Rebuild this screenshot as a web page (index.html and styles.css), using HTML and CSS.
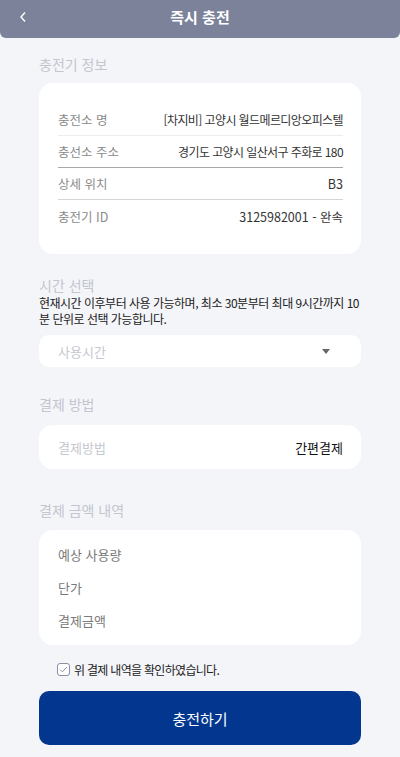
FILE: index.html
```html
<!DOCTYPE html>
<html lang="ko">
<head>
<meta charset="utf-8">
<link rel="stylesheet" href="styles.css">
</head>
<body>
<header class="topbar">
  <span class="back">
    <svg width="8" height="12" viewBox="0 0 8 12"><path d="M6 1.5 L2 6 L6 10.5" fill="none" stroke="#fff" stroke-width="1.4"/></svg>
  </span>
  <h1 class="title">즉시 충전</h1>
</header>
<main class="content">
  <h2 class="sec-title first">충전기 정보</h2>
  <section class="card info">
    <div class="row line-light"><span class="lbl">충전소 명</span><span class="val ko">[차지비] 고양시 월드메르디앙오피스텔</span></div>
    <div class="row line-dark"><span class="lbl">충선소 주소</span><span class="val ko">경기도 고양시 일산서구 주화로 180</span></div>
    <div class="row line-mid"><span class="lbl">상세 위치</span><span class="val">B3</span></div>
    <div class="row"><span class="lbl">충전기 ID</span><span class="val">3125982001 - 완속</span></div>
  </section>

  <h2 class="sec-title">시간 선택</h2>
  <p class="desc">현재시간 이후부터 사용 가능하며, 최소 30분부터 최대 9시간까지 10<br>분 단위로 선택 가능합니다.</p>
  <div class="select">
    <span class="placeholder">사용시간</span>
    <svg class="caret" width="8" height="5" viewBox="0 0 8 5"><path d="M0 0 H8 L4 5 Z" fill="#666"/></svg>
  </div>

  <h2 class="sec-title gap-lg">결제 방법</h2>
  <section class="card pay">
    <span class="placeholder">결제방법</span>
    <span class="pay-val">간편결제</span>
  </section>

  <h2 class="sec-title gap-xl">결제 금액 내역</h2>
  <section class="card amount">
    <div class="arow">예상 사용량</div>
    <div class="arow">단가</div>
    <div class="arow">결제금액</div>
  </section>

  <label class="agree">
    <span class="check">
      <svg width="13" height="13" viewBox="0 0 13 13"><rect x="0.5" y="0.5" width="12" height="12" rx="2.5" fill="#fff" stroke="#8a8fa6"/><path d="M3.2 6.6 L5.4 8.8 L9.8 4.2" fill="none" stroke="#8a8fa6" stroke-width="1"/></svg>
    </span>
    <span class="agree-text">위 결제 내역을 확인하였습니다.</span>
  </label>

  <button class="submit">충전하기</button>
</main>
</body>
</html>
```
FILE: styles.css
```css
* { box-sizing: border-box; }
html, body { margin: 0; padding: 0; }
body {
  background: #f4f5f9;
  font-family: "Noto Sans CJK KR", "Noto Sans", sans-serif;
  width: 400px;
  height: 757px;
  overflow: hidden;
}
.topbar {
  height: 38px;
  background: #7b8299;
  border-radius: 0 0 6px 6px;
  display: flex;
  align-items: center;
  justify-content: center;
  position: relative;
}
.back {
  position: absolute;
  left: 19px;
  top: 11px;
  display: flex;
}
.title {
  margin: 0;
  color: #fff;
  font-size: 15px;
  font-weight: 700;
  line-height: 20px;
  margin-top: -4px;
}
.content {
  padding: 0 39px;
  display: flex;
  flex-direction: column;
}
.sec-title {
  margin: 21px 0 0;
  font-size: 14px;
  font-weight: 400;
  line-height: 20px;
  color: #c3c5cf;
}
.sec-title.first { margin-top: 16px; }
.sec-title.gap-lg { margin-top: 27px; }
.sec-title.gap-xl { margin-top: 31px; }
.card {
  background: #fff;
  border-radius: 14px;
  margin-top: 9px;
}
.info { padding: 21px 18px 22px 19px; }
.row {
  height: 32px;
  display: flex;
  align-items: center;
  justify-content: space-between;
  font-size: 12.5px;
}
.line-light { border-bottom: 1px solid #ececec; }
.line-dark { border-bottom: 1px solid #a8a8a8; }
.line-mid { border-bottom: 1px solid #d4d4d4; }
.lbl { color: #8a8a8a; }
.val { color: #333; }
.val.ko { font-size: 12px; letter-spacing: -0.6px; }
.desc {
  margin: 0;
  font-size: 12px;
  line-height: 16px;
  color: #222;
  letter-spacing: -0.5px;
  white-space: nowrap;
}
.select {
  margin-top: 8px;
  height: 32px;
  background: #fff;
  border-radius: 10px;
  display: flex;
  align-items: center;
  justify-content: space-between;
  padding: 0 31px 0 19px;
}
.placeholder {
  color: #c6c8d0;
  font-size: 13px;
}
.caret { display: block; }
.pay {
  height: 44px;
  margin-top: 11px;
  display: flex;
  align-items: center;
  justify-content: space-between;
  padding: 0 18px 0 19px;
}
.pay-val { color: #111; font-size: 13px; }
.amount {
  margin-top: 10px;
  padding: 8px 19px;
}
.arow {
  height: 33px;
  display: flex;
  align-items: center;
  font-size: 13px;
  color: #7a7a7a;
}
.agree {
  display: flex;
  align-items: center;
  gap: 4px;
  margin: 17px 0 0 18px;
  height: 14px;
}
.check { display: flex; }
.agree-text { font-size: 12px; color: #222; letter-spacing: -0.7px; }
.submit {
  margin-top: 15px;
  height: 54px;
  border: 0;
  border-radius: 10px;
  background: #03378f;
  color: #fff;
  font-family: inherit;
  font-size: 15px;
}
```
